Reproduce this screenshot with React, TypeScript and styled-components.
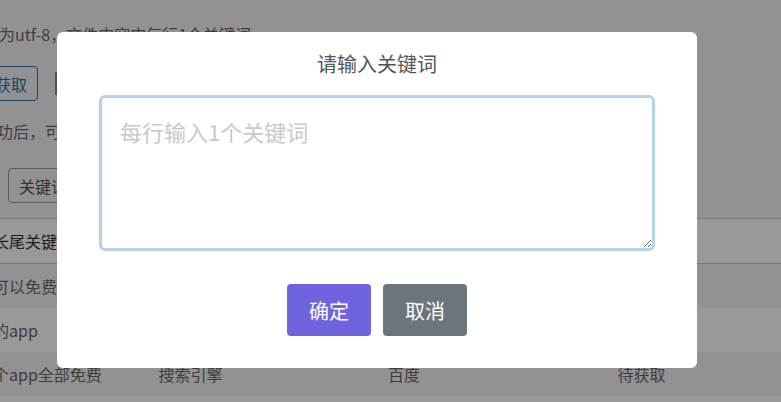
import styled, {createGlobalStyle} from "styled-components";

const GlobalStyle = createGlobalStyle`
  html, body {
    margin: 0;
    padding: 0;
    background: #f4f4f4;
    font-family: "Noto Sans CJK SC", "Noto Sans", sans-serif;
    overflow: hidden;
  }
`;

const Page = styled.div`
  width: 781px;
  height: 402px;
  overflow: hidden;
  padding-top: 22px;
  box-sizing: border-box;
  color: #666;
  font-size: 16px;
  line-height: 24px;
`;

const TextLine = styled.div<{ shift: number, gap: number }>`
  margin-left: ${props => props.shift}px;
  margin-top: ${props => props.gap}px;
  white-space: nowrap;
`;

const ToolRow = styled.div<{ gap: number }>`
  display: flex;
  align-items: center;
  margin-top: ${props => props.gap}px;
  height: 35px;
`;

const OutlineButton = styled.button<{ tone: string, shift: number }>`
  height: 35px;
  padding: 0 10px;
  margin-left: ${props => props.shift}px;
  border: 1px solid ${props => props.tone};
  border-radius: 4px;
  background: transparent;
  color: ${props => props.tone === '#2f6ea8' ? '#2f6ea8' : '#555'};
  font: inherit;
  white-space: nowrap;
`;

const FileBox = styled.div`
  width: 60px;
  height: 23px;
  margin-left: 17px;
  background: #8a8a8a;
`;

const Table = styled.div`
  margin-top: 15px;
  margin-left: -83px;
  width: 918px;
`;

const Row = styled.div<{ head?: boolean, striped?: boolean }>`
  display: grid;
  grid-template-columns: repeat(4, 229.5px);
  background: ${props => props.striped ? '#fff' : 'transparent'};
  border-top: ${props => props.head ? '1px solid #c8c8c8' : 'none'};
  border-bottom: ${props => props.head ? '1px solid #c8c8c8' : 'none'};
  color: ${props => props.head ? '#333' : '#666'};
`;

const Cell = styled.div`
  padding: 10px 12px;
  white-space: nowrap;
  overflow: hidden;
`;

const Backdrop = styled.div`
  position: fixed;
  inset: 0;
  background: rgba(0, 0, 0, 0.4);
`;

const Modal = styled.div`
  margin: 32px 0 0 57px;
  width: 640px;
  height: 336px;
  box-sizing: border-box;
  padding: 18px 42px 32px;
  background: #fff;
  border-radius: 6px;
  display: flex;
  flex-direction: column;
`;

const Title = styled.div`
  text-align: center;
  font-size: 20px;
  line-height: 28px;
  color: #555;
`;

const KeywordInput = styled.textarea`
  margin-top: 17px;
  height: 156px;
  box-sizing: border-box;
  border: 3px solid #b4d2eb;
  border-radius: 6px;
  padding: 17px 18px;
  font-family: inherit;
  font-size: 22px;
  line-height: 33px;
  color: #333;
  outline: none;

  &::placeholder {
    color: #c8c8c8;
  }
`;

const Actions = styled.div`
  display: flex;
  justify-content: center;
  gap: 12px;
  margin-top: 33px;
`;

const ActionButton = styled.button<{ bg: string }>`
  width: 84px;
  height: 52px;
  border: none;
  border-radius: 4px;
  background: ${props => props.bg};
  color: #fff;
  font-family: inherit;
  font-size: 20px;
`;

const rows = [
    {cells: ['哪些软件可以免费下载', '搜索引擎', '百度', '待获取'], striped: false},
    {cells: ['免费好用的app', '搜索引擎', '百度', '待获取'], striped: true},
    {cells: ['有没有哪个app全部免费', '搜索引擎', '百度', '待获取'], striped: false},
    {cells: ['免费软件下载大全', '搜索引擎', '百度', '待获取'], striped: true},
];

export default function App() {
    return (
        <>
            <GlobalStyle/>
            <Page>
                <TextLine shift={-33} gap={0}>编码为utf-8，文件内容中每行1个关键词</TextLine>
                <ToolRow gap={20}>
                    <OutlineButton tone="#2f6ea8" shift={-16}>获取</OutlineButton>
                    <FileBox/>
                </ToolRow>
                <TextLine shift={-19} gap={18}>成功后，可以在下方表格中查看结果</TextLine>
                <ToolRow gap={25}>
                    <OutlineButton tone="#9a9a9a" shift={8}>关键词导出</OutlineButton>
                </ToolRow>
                <Table>
                    <Row head striped>
                        <Cell>百度下拉长尾关键词</Cell>
                        <Cell>来源</Cell>
                        <Cell>平台</Cell>
                        <Cell>状态</Cell>
                    </Row>
                    {rows.map((row, i) => (
                        <Row key={i} striped={row.striped}>
                            {row.cells.map((c, j) => <Cell key={j}>{c}</Cell>)}
                        </Row>
                    ))}
                </Table>
            </Page>
            <Backdrop>
                <Modal>
                    <Title>请输入关键词</Title>
                    <KeywordInput placeholder="每行输入1个关键词"/>
                    <Actions>
                        <ActionButton bg="#7063de">确定</ActionButton>
                        <ActionButton bg="#6c757d">取消</ActionButton>
                    </Actions>
                </Modal>
            </Backdrop>
        </>
    )
}
